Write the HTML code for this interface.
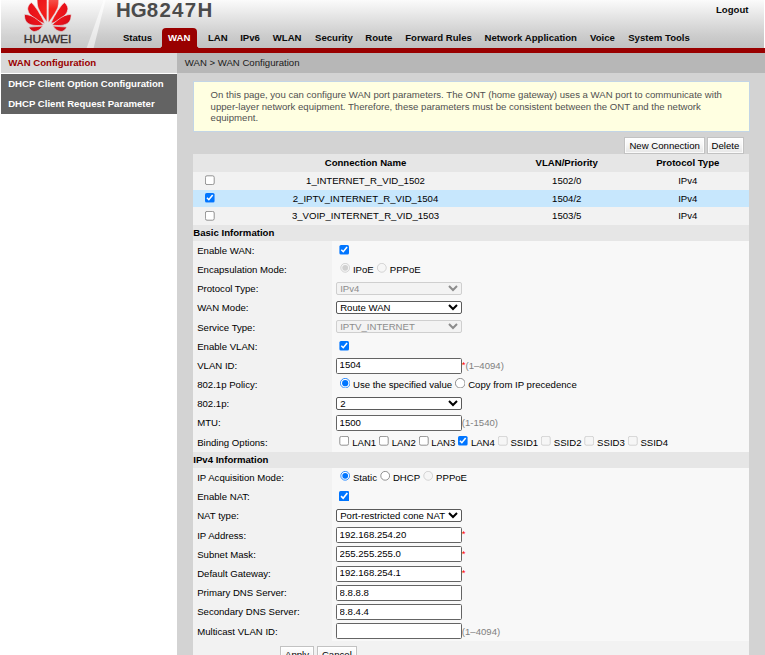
<!DOCTYPE html>
<html><head><meta charset="utf-8"><title>HG8247H</title>
<style>
html,body{margin:0;padding:0;background:#fff;}
body{zoom:.8;font-family:"Liberation Sans",Arial,sans-serif;font-size:12px;color:#000;overflow:hidden;}
@supports not (zoom:1){body{transform:scale(.8);transform-origin:0 0;width:956.25px;}}
#root{position:relative;width:956.25px;height:818.75px;overflow:hidden;}
.abs{position:absolute;}
#hdr{left:1.5px;top:0;width:953.5px;height:60px;background:linear-gradient(#fbfbfb 0%,#ebebeb 25%,#dbdbdb 50%,#cccccc 75%,#c1c1c1 100%);}
#red{left:1.5px;top:60px;width:954.75px;height:6px;background:#990000;}
#title{left:145.1px;top:-3.5px;font-size:25.6px;font-weight:bold;color:#4b4b4b;line-height:32px;white-space:nowrap;}
#title span{letter-spacing:1.6px;}
.nav{top:39.5px;font-weight:bold;line-height:14px;white-space:nowrap;color:#0a0a0a;}
#tab{left:202.75px;top:35px;width:43.5px;height:26px;background:#990000;border-radius:5px 5px 0 0;}
#tab:before,#tab:after{content:"";position:absolute;bottom:1px;width:4px;height:4px;}
#tab:before{left:-4px;background:radial-gradient(circle at 0 0,rgba(153,0,0,0) 3.5px,#990000 4.2px);}
#tab:after{right:-4px;background:radial-gradient(circle at 100% 0,rgba(153,0,0,0) 3.5px,#990000 4.2px);}
#side{left:1.25px;top:66px;width:220.25px;}
#side .cur{height:25px;line-height:25px;background:#d9d9d9;color:#990000;font-weight:bold;padding-left:9px;margin-bottom:1.5px;}
#side .it{height:25px;line-height:25px;background:#636363;color:#fff;font-weight:bold;padding-left:9px;}
#main{left:221.5px;top:66px;width:734.75px;height:760px;background:#d3d3d3;}
#bc{left:221.5px;top:66px;width:734.75px;height:25px;line-height:25px;background:#b7b7b7;color:#1a1a1a;}
#bc span{padding-left:9.5px;}
#info{left:241.5px;top:101.3px;width:693px;height:61.3px;border:1px solid #c3d5e6;background:#ffffe1;color:#505050;}
#info div{position:absolute;left:20.5px;top:9.3px;line-height:14.2px;width:660px;}
.btn{box-sizing:border-box;height:21.25px;border:1px solid #c2c2c2;box-shadow:inset 0 0 0 1px #fff;background:linear-gradient(#ffffff 0%,#f6f6f6 45%,#e6e6e6 100%);font-size:12px;line-height:19.5px;text-align:center;color:#000;white-space:nowrap;}

#tbl .tr{height:22.2px;line-height:22.2px;background:#f2f2f2;white-space:nowrap;font-size:0;}
#tbl .tr span{display:inline-block;font-size:12px;text-align:center;vertical-align:top;height:22px;color:#000;}
#tbl .th{background:#e6e6e6;}
#tbl .th span{font-weight:bold;}
#tbl .sel{background:#c7e7fd;}
.c1{width:6%}.c2{width:50%}.c3{width:22%;position:relative;left:1.5px}.c4{width:22%}
input[type=checkbox],input[type=radio]{margin:0;padding:0;width:13px;height:13px;vertical-align:top;}
#tbl input{margin-top:4.5px;}
.frm .fh{background:#e6e6e6;font-weight:bold;color:#000;}
.fr{height:24px;position:relative;}
.fl{position:absolute;left:0;top:0;width:25%;height:24px;line-height:24px;background:#f2f2f2;box-sizing:border-box;padding-left:4.9px;color:#000;white-space:nowrap;}
.fv{position:absolute;left:25%;top:0;width:75%;height:24px;line-height:24px;background:#f8f8f8;box-sizing:border-box;padding-left:5px;white-space:nowrap;font-size:0;}
.fv>*{font-size:12px;}
.fv input[type=checkbox]{margin:5px 3px 0 4px;}
.fv input[type=checkbox]:not(:only-child){margin-top:3.75px;}
.fv input[type=radio]{margin:3.75px 3px 0 4px;}
.fv input[type=radio]:first-child{margin-left:5px;}
.fv .bl+input[type=checkbox]{margin-left:3.5px;}
.fv select{font-family:"Liberation Sans",Arial,sans-serif;font-size:12px;width:157px;height:16px;margin:3.5px 0 0 0;padding:0 0 0 0;vertical-align:top;border:1px solid #5a5a5a;border-radius:2.5px;background-color:#fff;color:#000;}
.fv select:disabled{border-color:#cfcfcf;background-color:#f3f3f3;color:#8c8c8c;opacity:1;}
.fv .tx{font-family:"Liberation Sans",Arial,sans-serif;font-size:12px;box-sizing:border-box;width:157px;height:20px;margin:2px 0 0 0;padding:0 2px 1.5px 3px;border:1px solid #646464;border-radius:2px;vertical-align:top;color:#000;background:#fff;}
.star{color:#f00;display:inline-block;vertical-align:top;position:relative;top:-1.5px;}
.hint{color:#808080;display:inline-block;vertical-align:top;}
.rl,.bl{display:inline-block;vertical-align:top;color:#000;}
</style></head><body>
<div id="root">
<div id="hdr" class="abs"></div>
<svg class="abs" style="left:0;top:0" width="150" height="60" viewBox="0 0 120 48">
<defs>
<linearGradient id="sl" x1="0" y1="0" x2="0" y2="1"><stop offset="0" stop-color="#fff" stop-opacity=".7"/><stop offset="1" stop-color="#fff" stop-opacity=".55"/></linearGradient>
<radialGradient id="rg" cx="47.8" cy="10" r="30" gradientUnits="userSpaceOnUse"><stop offset="0" stop-color="#f5231c"/><stop offset=".6" stop-color="#e8101a"/><stop offset="1" stop-color="#c20a16"/></radialGradient>
<linearGradient id="hl" x1="0" y1="0" x2="0" y2="1"><stop offset="0" stop-color="#ff9a8a"/><stop offset=".5" stop-color="#f5231c"/></linearGradient>
<linearGradient id="hg" x1="0" y1="0" x2="0" y2="48" gradientUnits="userSpaceOnUse"><stop offset="0" stop-color="#fbfbfb"/><stop offset=".25" stop-color="#ebebeb"/><stop offset=".5" stop-color="#dbdbdb"/><stop offset=".75" stop-color="#cccccc"/><stop offset="1" stop-color="#c1c1c1"/></linearGradient>
<g id="half" stroke="url(#hg)" stroke-width=".7" stroke-linejoin="round">
<path d="M46.9,22.2 C45.6,20.4 44.8,19.2 44.2,18.3 C42.6,15.8 41.3,13.8 40.5,12.4 C38.6,9.2 37.8,7.4 37.6,5.9 C37.1,3.5 37,1.5 37,-4 L47.1,-4 C47.2,5 47.1,14 46.9,22.2Z"/>
<path d="M44.5,23.4 C41.5,22.6 39.5,21.7 37.6,20.5 C35,18.9 33,17.5 31.7,16.1 C29.8,14.2 28.8,12.9 28.4,11.7 C27.8,10.3 27.6,9 27.7,8.1 C28.2,5.6 29.6,3.6 31.3,2.6 C33.2,4 34.8,6 36.1,8.1 C37.6,10 38.7,11.8 39.8,13.9 C41,15.7 41.9,17.3 42.7,19 C43.5,20.6 44.1,22 44.5,23.4Z"/>
<path d="M43.3,24.9 C41,25.6 38,25.6 35,25.4 C33.5,25.3 32.5,25.2 31.7,24.9 C29.7,24.3 28.3,23.6 27.3,22.7 C25.9,21.4 25.2,19.9 24.8,18.3 C24.4,16.8 24.4,15.4 24.5,14.3 C27,14.5 29,15 31,15.7 C33.5,16.8 35.6,18.2 37.6,19.8 C39.8,21.4 41.7,23 43.3,24.7Z"/>
<path d="M42.7,26.1 L28.8,27.1 C29.3,28.3 30,29.2 31,30 C32,30.9 33.2,31.5 34.6,31.5 C36.2,31.3 37.6,30.8 39,30 C40.4,29 41.6,27.7 42.7,26.1Z"/>
</g>
</defs>
<polygon points="0,0 103.6,0 86.6,48 0,48" fill="#fff" opacity=".13"/>
<polygon points="103.6,0 105.6,0 93.6,48 86.6,48" fill="url(#sl)"/>
<use href="#half" fill="url(#rg)"/>
<use href="#half" fill="url(#rg)" transform="translate(95.6,0) scale(-1,1)"/>
<path d="M46.9,22.2 C45.6,20.4 44.8,19.2 44.2,18.3 C42.6,15.8 41.3,13.8 40.5,12.4 C38.6,9.2 37.8,7.4 37.6,5.9 C37.1,3.5 37,1.5 37,-4 L47.1,-4 C47.2,5 47.1,14 46.9,22.2Z" fill="url(#hl)" opacity=".6" transform="translate(95.6,0) scale(-1,1)"/>
<text x="23.8" y="42.7" font-family="Liberation Sans, Arial, sans-serif" font-weight="normal" font-size="10.6" fill="#3a3032" stroke="#3a3032" stroke-width=".35" textLength="47.6" lengthAdjust="spacingAndGlyphs">HUAWEI</text>
</svg>
<div id="red" class="abs"></div>
<div id="title" class="abs">HG<span>8247</span>H</div>
<div id="tab" class="abs"></div>
<div class="abs nav" style="left:153.6px">Status</div>
<div class="abs nav" style="left:210px;color:#fff">WAN</div>
<div class="abs nav" style="left:260px">LAN</div>
<div class="abs nav" style="left:300.25px">IPv6</div>
<div class="abs nav" style="left:340.9px">WLAN</div>
<div class="abs nav" style="left:393.75px">Security</div>
<div class="abs nav" style="left:456.6px">Route</div>
<div class="abs nav" style="left:506.5px">Forward Rules</div>
<div class="abs nav" style="left:605.75px">Network Application</div>
<div class="abs nav" style="left:737.5px">Voice</div>
<div class="abs nav" style="left:785.25px">System Tools</div>
<div class="abs nav" style="left:895px;top:5.25px">Logout</div>
<div id="main" class="abs"></div>
<div id="side" class="abs"><div class="cur">WAN Configuration</div><div class="it">DHCP Client Option Configuration</div><div class="it">DHCP Client Request Parameter</div></div>
<div id="bc" class="abs"><span>WAN &gt; WAN Configuration</span></div>
<div id="info" class="abs"><div>On this page, you can configure WAN port parameters. The ONT (home gateway) uses a WAN port to communicate with upper-layer network equipment. Therefore, these parameters must be consistent between the ONT and the network equipment.</div></div>
<div class="abs btn" style="left:780.4px;top:171.25px;width:100.85px">New Connection</div>
<div class="abs btn" style="left:883.6px;top:171.25px;width:46.4px">Delete</div>
<div class="abs" id="tbl" style="left:241.6px;top:192.5px;width:694.6px">
<div class="tr th"><span class="c1"></span><span class="c2">Connection Name</span><span class="c3">VLAN/Priority</span><span class="c4">Protocol Type</span></div>
<div class="tr"><span class="c1"><input type="checkbox"></span><span class="c2">1_INTERNET_R_VID_1502</span><span class="c3">1502/0</span><span class="c4">IPv4</span></div>
<div class="tr sel"><span class="c1"><input type="checkbox" checked></span><span class="c2">2_IPTV_INTERNET_R_VID_1504</span><span class="c3">1504/2</span><span class="c4">IPv4</span></div>
<div class="tr"><span class="c1"><input type="checkbox"></span><span class="c2">3_VOIP_INTERNET_R_VID_1503</span><span class="c3">1503/5</span><span class="c4">IPv4</span></div>
</div>
<div class="abs frm" style="left:241.6px;top:281px;width:694.6px">
<div class="fh" style="height:20px;line-height:20px">Basic Information</div>
<div class="fr"><div class="fl">Enable WAN:</div><div class="fv"><input type="checkbox" checked></div></div>
<div class="fr"><div class="fl">Encapsulation Mode:</div><div class="fv"><input type="radio" checked disabled><span class="rl">IPoE</span><input type="radio" disabled><span class="rl">PPPoE</span></div></div>
<div class="fr"><div class="fl">Protocol Type:</div><div class="fv"><select disabled><option>IPv4</option></select></div></div>
<div class="fr"><div class="fl">WAN Mode:</div><div class="fv"><select><option>Route WAN</option></select></div></div>
<div class="fr"><div class="fl">Service Type:</div><div class="fv"><select disabled><option>IPTV_INTERNET</option></select></div></div>
<div class="fr"><div class="fl">Enable VLAN:</div><div class="fv"><input type="checkbox" checked></div></div>
<div class="fr"><div class="fl">VLAN ID:</div><div class="fv"><input type="text" class="tx" value="1504"><span class="star">*</span><span class="hint">(1–4094)</span></div></div>
<div class="fr"><div class="fl">802.1p Policy:</div><div class="fv"><input type="radio" checked><span class="rl">Use the specified value</span><input type="radio"><span class="rl">Copy from IP precedence</span></div></div>
<div class="fr"><div class="fl">802.1p:</div><div class="fv"><select><option>2</option></select></div></div>
<div class="fr"><div class="fl">MTU:</div><div class="fv"><input type="text" class="tx" value="1500"><span class="hint">(1-1540)</span></div></div>
<div class="fr"><div class="fl">Binding Options:</div><div class="fv"><input type="checkbox"><span class="bl">LAN1</span><input type="checkbox"><span class="bl">LAN2</span><input type="checkbox"><span class="bl">LAN3</span><input type="checkbox" checked><span class="bl">LAN4</span><input type="checkbox" disabled><span class="bl">SSID1</span><input type="checkbox" disabled><span class="bl">SSID2</span><input type="checkbox" disabled><span class="bl">SSID3</span><input type="checkbox" disabled><span class="bl">SSID4</span></div></div>
</div>
<div class="abs frm" style="left:241.6px;top:565px;width:694.6px">
<div class="fh" style="height:20px;line-height:20px">IPv4 Information</div>
<div class="fr"><div class="fl">IP Acquisition Mode:</div><div class="fv"><input type="radio" checked><span class="rl">Static</span><input type="radio"><span class="rl">DHCP</span><input type="radio" disabled><span class="rl">PPPoE</span></div></div>
<div class="fr"><div class="fl">Enable NAT:</div><div class="fv"><input type="checkbox" checked></div></div>
<div class="fr"><div class="fl">NAT type:</div><div class="fv"><select><option>Port-restricted cone NAT</option></select></div></div>
<div class="fr"><div class="fl">IP Address:</div><div class="fv"><input type="text" class="tx" value="192.168.254.20"><span class="star">*</span></div></div>
<div class="fr"><div class="fl">Subnet Mask:</div><div class="fv"><input type="text" class="tx" value="255.255.255.0"><span class="star">*</span></div></div>
<div class="fr"><div class="fl">Default Gateway:</div><div class="fv"><input type="text" class="tx" value="192.168.254.1"><span class="star">*</span></div></div>
<div class="fr"><div class="fl">Primary DNS Server:</div><div class="fv"><input type="text" class="tx" value="8.8.8.8"></div></div>
<div class="fr"><div class="fl">Secondary DNS Server:</div><div class="fv"><input type="text" class="tx" value="8.8.4.4"></div></div>
<div class="fr"><div class="fl">Multicast VLAN ID:</div><div class="fv"><input type="text" class="tx" value=""><span class="hint">(1–4094)</span></div></div>
</div>
<div class="abs" style="left:241.6px;top:801px;width:694.6px;height:40px;background:#f2f2f2"></div>
<div class="abs btn" style="left:350.5px;top:807.5px;width:41.5px">Apply</div>
<div class="abs btn" style="left:396.5px;top:807.5px;width:49.2px">Cancel</div>
</div>
</body></html>
